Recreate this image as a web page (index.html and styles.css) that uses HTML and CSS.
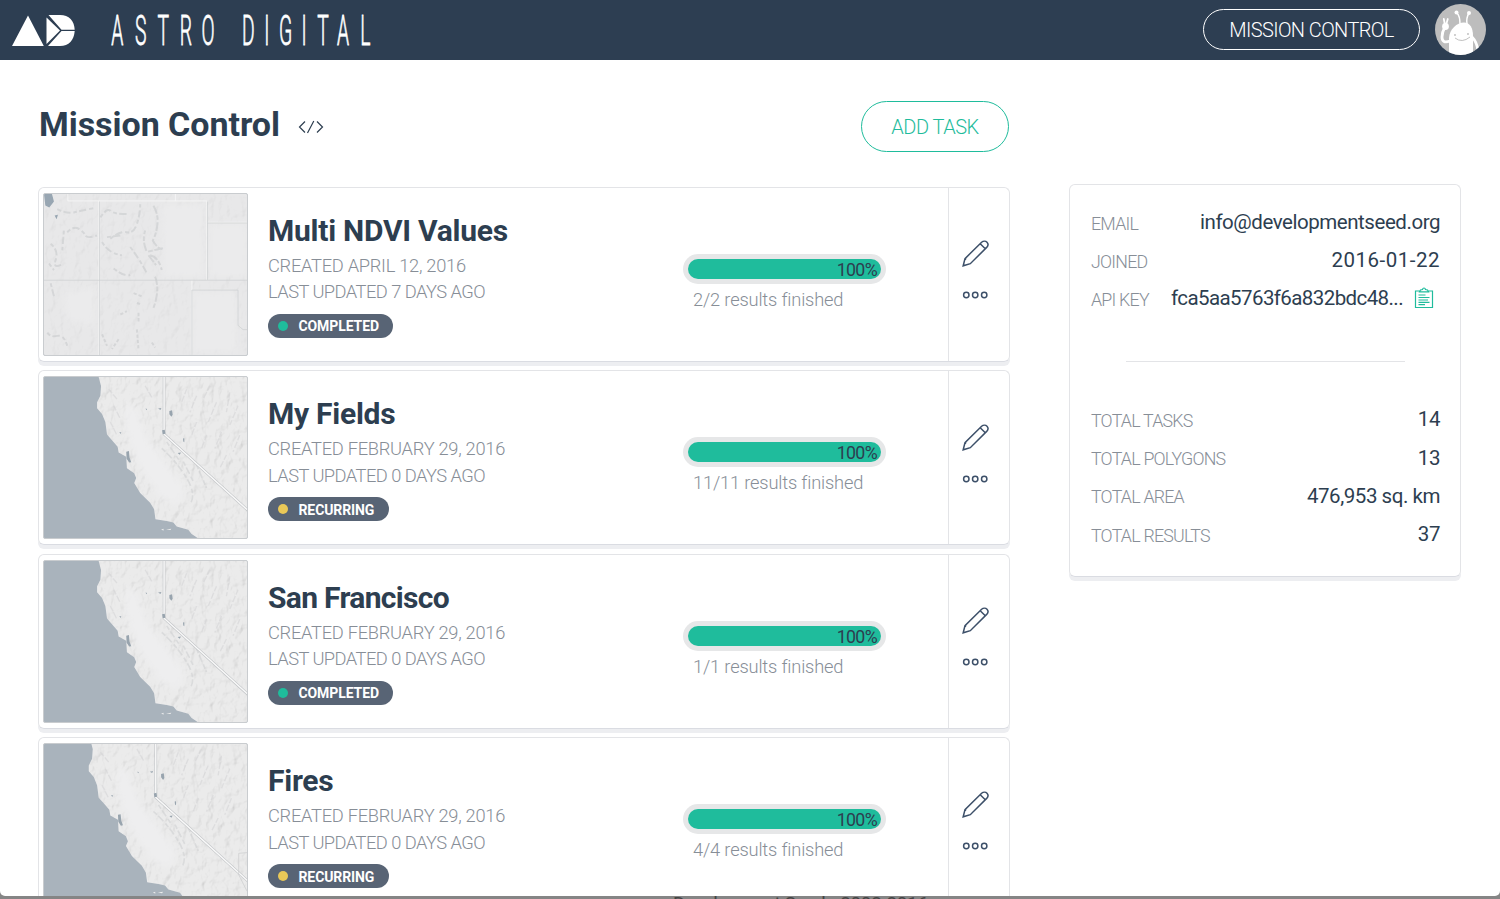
FILE: index.html
```html
<!DOCTYPE html>
<html lang="en">
<head>
<meta charset="utf-8">
<title>Mission Control</title>
<link rel="stylesheet" href="styles.css">
</head>
<body>
<svg class="defs" width="0" height="0">
  <defs>
    <filter id="relief" x="0" y="0" width="100%" height="100%">
      <feTurbulence type="fractalNoise" baseFrequency="0.042 0.03" numOctaves="4" seed="8"/>
      <feColorMatrix values="0 0 0 0 1  0 0 0 0 1  0 0 0 0 1  1.4 0 0 0 -.2"/>
      <feDiffuseLighting surfaceScale="9" diffuseConstant="1.15" lighting-color="#fff"><feDistantLight azimuth="215" elevation="58"/></feDiffuseLighting>
    </filter>
    <filter id="soft"><feGaussianBlur stdDeviation="9"/></filter>
    <path id="coast" d="M205 10L205 34 212 60 210 90 200 110 200 128 215 145 225 170 230 208 245 225 262 245 265 262 288 275 290 310 312 325 318 340 312 355 330 385 360 415 372 435 376 465 410 470 430 475 440 487 475 497 485 510 500 520 560 570H720V10Z"/>
    <clipPath id="land"><use href="#coast"/></clipPath>
    <symbol id="california" viewBox="40 33 612 489" overflow="visible">
      <use href="#coast" fill="#e8e8e9"/>
      <g clip-path="url(#land)">
        <rect x="40" y="10" width="680" height="540" filter="url(#relief)" opacity=".13"/>
        <path d="M285 110L320 130 350 220 420 310 465 370 450 420 400 410 350 340 310 270 285 180Z" fill="#eeeeef" filter="url(#soft)"/>
        <path d="M395 250Q440 290 470 340T480 420M460 290L490 350M500 300L530 370M410 230L450 290" fill="none" stroke="#cfd0d2" stroke-width="5" stroke-dasharray="14 6 22 9" opacity=".6"/>
        <path d="M470 70L455 110M500 90L480 140M540 60L520 100M560 110L535 170M600 80L590 140M625 120L600 180M500 170L485 210M530 210L515 250M575 200L555 250M630 210L610 260M590 270L570 310M235 70L260 100M250 120L270 160M240 170L260 210M345 60L365 95" fill="none" stroke="#d3d4d6" stroke-width="4" stroke-dasharray="16 5 20 7" opacity=".6"/>
      </g>
      <path d="M402 10V207L720 498" fill="none" stroke="#c0c3c6" stroke-width="8"/>
      <path d="M402 10V207L720 498" fill="none" stroke="#f8f8f8" stroke-width="4.500"/>
      <path d="M288 260l8-2 2 20 5 14-6 1-8-12zM418 136l8-2 2 14-4 6-6-8zM384 129l10-2-3 6zM396 195l8-2 2 12-8 2zM443 264l10-2-4 7zM459 220l4-1v12l-3-2zM267 201l6 0-2 5zM346 129l5 1-2 4z" fill="#98a4ae"/>
      <path d="M393 497l7-3 1 5zM408 496l16-2-3 4z" fill="#eee"/>
    </symbol>
    <symbol id="pencil" viewBox="0 0 27 27">
      <path d="M1.200 25.800L3 18.600 19.600 2.300C21.300.800 23.700.800 25 2.200 26.300 3.600 26.200 5.800 24.700 7.400L8.300 23.700ZM18.200 3.700L23.300 8.800M3 18.600L4.200 19.300"/>
    </symbol>
    <symbol id="dots" viewBox="0 0 27 8">
      <circle cx="4.300" cy="4" r="2.700"/><circle cx="13.200" cy="4" r="2.700"/><circle cx="22.200" cy="4" r="2.700"/>
    </symbol>
  </defs>
</svg>

<div class="window">
  <header class="topbar">
    <div class="brand">
      <svg width="380" height="60" viewBox="0 0 380 60">
        <path d="M28 15.500L43.800 46H12ZM46.500 17.500L60 30.500 46.500 44ZM48.500 15H60C69 15 74.500 21 74.700 29.800H61.500ZM61.500 31H74.700C74 40 69 46 60 46H48Z" fill="#fff"/>
        <text class="wordmark" transform="scale(.46 1)" y="45.500" x="255 306 355 404 452 500 540 580 621 661 702 746 794">ASTRO DIGITAL</text>
      </svg>
    </div>
    <nav class="account">
      <a class="pill pill-light">MISSION CONTROL</a>
      <svg class="avatar" viewBox="0 0 51 51">
        <clipPath id="round"><circle cx="25.500" cy="25.500" r="25.500"/></clipPath>
        <g clip-path="url(#round)">
          <rect width="51" height="51" fill="#bdbdbd"/>
          <path d="M14 54V34C14.500 25 22 18.500 29 18.500 35 18.500 38 24 38 32V54Z" fill="#fff"/>
          <g fill="none" stroke="#fff" stroke-linecap="round">
            <path d="M25 20Q25 12 22 9M32 20Q31 14 34 9" stroke-width="1.500"/>
            <path d="M15 37Q7 40 7 33 7 28 10 23" stroke-width="2.800"/>
            <path d="M37 33Q42 38 43 47" stroke-width="2.800"/>
            <path d="M10 21L8.800 15M11 21L12.800 15" stroke-width="1.800"/>
          </g>
          <g fill="#fff"><circle cx="21.500" cy="8.500" r="2"/><circle cx="34" cy="9" r="2"/><circle cx="10.500" cy="22.500" r="3.400"/></g>
          <g fill="none" stroke="#b0b0b0" stroke-width=".800"><path d="M20 34Q27 39.500 35 33"/><circle cx="20" cy="31" r=".600"/><circle cx="33" cy="30" r=".600"/></g>
        </g>
      </svg>
    </nav>
  </header>

  <main class="page">
    <section class="tasks">
      <div class="heading">
        <h1>Mission Control</h1>
        <svg class="code" viewBox="0 0 26 14"><path d="M7 1.500L1.500 7 7 12.500M19 1.500L24.500 7 19 12.500M15.800 1L9.500 13"/></svg>
        <a class="pill pill-green">ADD TASK</a>
      </div>

      <article class="card">
        <svg class="map map-plain" viewBox="40 39 612 489" preserveAspectRatio="none">
          <rect x="40" y="39" width="612" height="489" fill="#e7e7e8"/>
          <rect x="40" y="39" width="612" height="489" filter="url(#relief)" opacity=".06"/>
          <path d="M395 70H520V290H400ZM540 130H652V290H540ZM490 335H620V520H490ZM100 340L190 320V440L110 420Z" fill="#ebebec" filter="url(#soft)"/>
          <g fill="none" stroke="#c9cbcd" stroke-width="6" stroke-linejoin="round" opacity=".6">
            <path d="M370 75Q385 100 382 130T368 180Q385 210 398 205T350 215Q335 180 345 150M360 225Q385 230 395 270M375 290Q390 330 370 385M355 225L378 255" stroke-dasharray="26 5 14 7"/>
            <path d="M215 185Q235 220 275 225M240 175Q270 150 290 155T320 130 330 70M250 265Q280 290 300 285M300 200Q330 240 350 280M230 170L270 165M110 155Q130 135 145 145T165 165 200 165M80 85Q110 100 130 95T190 82M60 190Q85 210 75 240T100 250M55 250L70 270M100 150L95 210M60 310L70 350M50 460Q60 475 80 470T110 500M210 110Q230 80 240 90T290 100" stroke-dasharray="12 7 22 9"/>
            <path d="M310 340L335 350M320 370L335 375M325 400V430M270 405L290 395M265 480L245 510M215 465L230 500M320 450L325 510M365 490L375 505" stroke-dasharray="10 6"/>
          </g>
          <path d="M40 39H64L70 62 56 80 44 74ZM72 104l10-2-4 14z" fill="#98a6b2"/>
          <g fill="none" stroke="#f5f5f5" stroke-width="3"><path d="M112 39V60H531V300M436 39V60M205 60V528M531 125H652M486 301V528"/></g>
          <g fill="none" stroke="#ccced0" stroke-width="2"><path d="M40 301H652M486 528V331H625V438L640 451H652M533 62V300M533 127H652M207 62V528"/></g>
        </svg>
        <div class="info">
          <h2>Multi NDVI Values</h2>
          <p>CREATED APRIL 12, 2016</p>
          <p class="updated">LAST UPDATED 7 DAYS AGO</p>
          <div class="badge done">COMPLETED</div>
        </div>
        <div class="progress"><div class="track"><div class="bar">100%</div></div><p>2/2 results finished</p></div>
        <div class="actions"><svg class="edit"><use href="#pencil"/></svg><svg class="more"><use href="#dots"/></svg></div>
      </article>

      <article class="card">
        <svg class="map" viewBox="40 33 612 489" preserveAspectRatio="none"><use href="#california" x="40" y="33" width="612" height="489"/></svg>
        <div class="info">
          <h2>My Fields</h2>
          <p>CREATED FEBRUARY 29, 2016</p>
          <p class="updated">LAST UPDATED 0 DAYS AGO</p>
          <div class="badge recurring">RECURRING</div>
        </div>
        <div class="progress"><div class="track"><div class="bar">100%</div></div><p>11/11 results finished</p></div>
        <div class="actions"><svg class="edit"><use href="#pencil"/></svg><svg class="more"><use href="#dots"/></svg></div>
      </article>

      <article class="card">
        <svg class="map" viewBox="40 33 612 489" preserveAspectRatio="none"><use href="#california" x="40" y="33" width="612" height="489"/></svg>
        <div class="info">
          <h2 class="tight">San Francisco</h2>
          <p>CREATED FEBRUARY 29, 2016</p>
          <p class="updated">LAST UPDATED 0 DAYS AGO</p>
          <div class="badge done">COMPLETED</div>
        </div>
        <div class="progress"><div class="track"><div class="bar">100%</div></div><p>1/1 results finished</p></div>
        <div class="actions"><svg class="edit"><use href="#pencil"/></svg><svg class="more"><use href="#dots"/></svg></div>
      </article>

      <article class="card">
        <svg class="map" viewBox="40 33 612 489" preserveAspectRatio="none"><use href="#california" x="15" y="21" width="612" height="489"/><path d="M652 363L627 365V430L652 480" fill="none" stroke="#c8cacc" stroke-width="2"/></svg>
        <div class="info">
          <h2>Fires</h2>
          <p>CREATED FEBRUARY 29, 2016</p>
          <p class="updated">LAST UPDATED 0 DAYS AGO</p>
          <div class="badge recurring">RECURRING</div>
        </div>
        <div class="progress"><div class="track"><div class="bar">100%</div></div><p>4/4 results finished</p></div>
        <div class="actions"><svg class="edit"><use href="#pencil"/></svg><svg class="more"><use href="#dots"/></svg></div>
      </article>
    </section>

    <aside class="summary">
      <dl>
        <dt>EMAIL</dt><dd>info@developmentseed.org</dd>
        <dt>JOINED</dt><dd class="date">2016-01-22</dd>
        <dt>API KEY</dt>
        <dd class="key">fca5aa5763f6a832bdc48...<svg class="clip" viewBox="0 0 20 22"><path d="M5.500 4H1.500V20.500H18.500V4H14.500M5.500 4.800H14.500L13.500 3 11.500 2.500C11 .500 9 .500 8.500 2.500L6.500 3ZM4.500 8H11.500M4.500 10.500H15.500M4.500 13H14M4.500 15.300H15.500M4.500 17.700H11"/></svg></dd>
      </dl>
      <hr>
      <dl>
        <dt>TOTAL TASKS</dt><dd>14</dd>
        <dt>TOTAL POLYGONS</dt><dd>13</dd>
        <dt>TOTAL AREA</dt><dd>476,953 sq. km</dd>
        <dt>TOTAL RESULTS</dt><dd>37</dd>
      </dl>
    </aside>
  </main>
</div>
<footer class="backdrop">Development Seed • 2002-2016</footer>
</body>
</html>
```
FILE: styles.css
```css
* { box-sizing: border-box; }
body {
  margin: 0;
  height: 899px;
  overflow: hidden;
  font-family: Roboto, "Liberation Sans", sans-serif;
  color: #2d3e50;
  background: #858585;
}
h1, h2, p, dl, dd { margin: 0; }
.defs { display: block; height: 0; }
.window { height: 896px; overflow: hidden; background: #fff; border-radius: 0 0 5px 5px; }
.topbar { height: 60px; display: flex; justify-content: space-between; background: #2d3e52; }
.brand svg { display: block; }
.wordmark { font-size: 42px; font-weight: 300; fill: #fff; stroke: #fff; stroke-width: .8px; text-anchor: middle; }
.account { display: flex; align-items: center; gap: 15px; padding: 0 14px 1px 0; }
.avatar { width: 51px; height: 51px; }
.pill { display: flex; align-items: center; justify-content: center; border-radius: 26px; font-size: 20px; font-weight: 300; }
.pill-light { width: 217px; height: 41px; border: 1.500px solid #fff; color: #fff; letter-spacing: -.6px; }
.pill-green { width: 148px; height: 51px; border: 1.500px solid #1fbc9c; color: #1fbc9c; margin: 0 1px 0 auto; letter-spacing: -.48px; }
.page { display: flex; gap: 59px; padding: 41px 39px 0 38px; }
.tasks { width: 972px; flex: none; display: flex; flex-direction: column; gap: 8.500px; }
.heading { display: flex; align-items: center; height: 51px; margin-bottom: 26px; }
h1 { font-size: 34px; line-height: 51px; font-weight: 700; margin-top: -4px; padding-left: 1px; letter-spacing: -.04px; }
.code { width: 26px; height: 14px; margin-left: 18px; fill: none; stroke: #2d3e50; stroke-width: 1.200; }
.card { height: 175px; flex: none; display: flex; border: 1px solid #e3e4e7; border-bottom-color: #dadce2; border-radius: 6px; box-shadow: 0 4px 0 #edeef1; padding: 5px 0 0 4px; }
.map { width: 205px; height: 163px; flex: none; border: 1px solid #c9cccf; border-radius: 2px; background: #a9b3bc; }
.info { width: 415px; padding: 20px 0 0 20px; }
.info h2 { font-size: 30px; line-height: 36px; margin-bottom: 4px; letter-spacing: -.25px; }
.info h2.tight { letter-spacing: -.68px; }
.info p { font-size: 18.300px; line-height: 26.700px; font-weight: 300; color: #878e97; letter-spacing: -.28px; }
.info .updated { letter-spacing: -.54px; }
.badge { display: inline-flex; align-items: center; gap: 10.500px; height: 24px; margin-top: 8px; padding: 1px 14.500px 0 10px; border-radius: 12px; background: #586475; color: #fff; font-size: 14px; font-weight: 700; letter-spacing: -.1px; }
.badge::before { content: ""; width: 10px; height: 10px; margin-top: -1px; border-radius: 50%; }
.done::before { background: #1fbc9c; }
.recurring::before { background: #e9c858; }
.progress { width: 203px; margin: 61px 0 0 20px; }
.track { height: 30px; padding: 5px; border-radius: 15px; background: #e6e7e8; }
.bar { height: 20px; padding-right: 4px; border-radius: 10px; background: #1fbc9c; font-size: 17.800px; line-height: 21px; text-align: right; letter-spacing: -.7px; }
.progress p { padding: 2px 0 0 10px; font-size: 18.300px; line-height: 27px; color: #878e97; font-weight: 300; white-space: nowrap; letter-spacing: -.17px; }
.actions { width: 61px; margin: -5px 0 0 auto; border-left: 1px solid #e3e4e7; display: flex; flex-direction: column; align-items: center; padding: 52.500px 7px 0 0; gap: 24px; fill: none; stroke: #3d5069; stroke-width: 1.500; }
.edit { width: 27px; height: 27px; }
.more { width: 27px; height: 8px; }
.summary { width: 392px; height: 393px; margin-top: 83px; border: 1px solid #e3e4e7; border-bottom-color: #dadce2; border-radius: 6px; box-shadow: 0 4px 0 #edeef1; padding: 18px 20px 0 21px; }
dl { display: grid; grid-template-columns: auto 1fr; grid-auto-rows: 38.200px; line-height: 38.200px; }
dt { font-size: 17.800px; font-weight: 300; color: #878e97; padding-top: 1.600px; letter-spacing: -.76px; }
dd { font-size: 20.500px; text-align: right; white-space: nowrap; letter-spacing: -.45px; }
.date { letter-spacing: .5px; }
.key { display: flex; justify-content: flex-end; align-items: center; gap: 11px; letter-spacing: -.59px; }
.clip { width: 20px; height: 22px; margin-right: 6px; fill: none; stroke: #1fbc9c; stroke-width: 1.200; }
hr { height: 1px; border: 0; margin: 43.400px 35px 38.400px; background: #e3e4e7; }
.backdrop { height: 3px; overflow: hidden; padding-left: 673px; font-size: 19px; line-height: 16px; color: #444; white-space: nowrap; letter-spacing: -.35px; }
```
